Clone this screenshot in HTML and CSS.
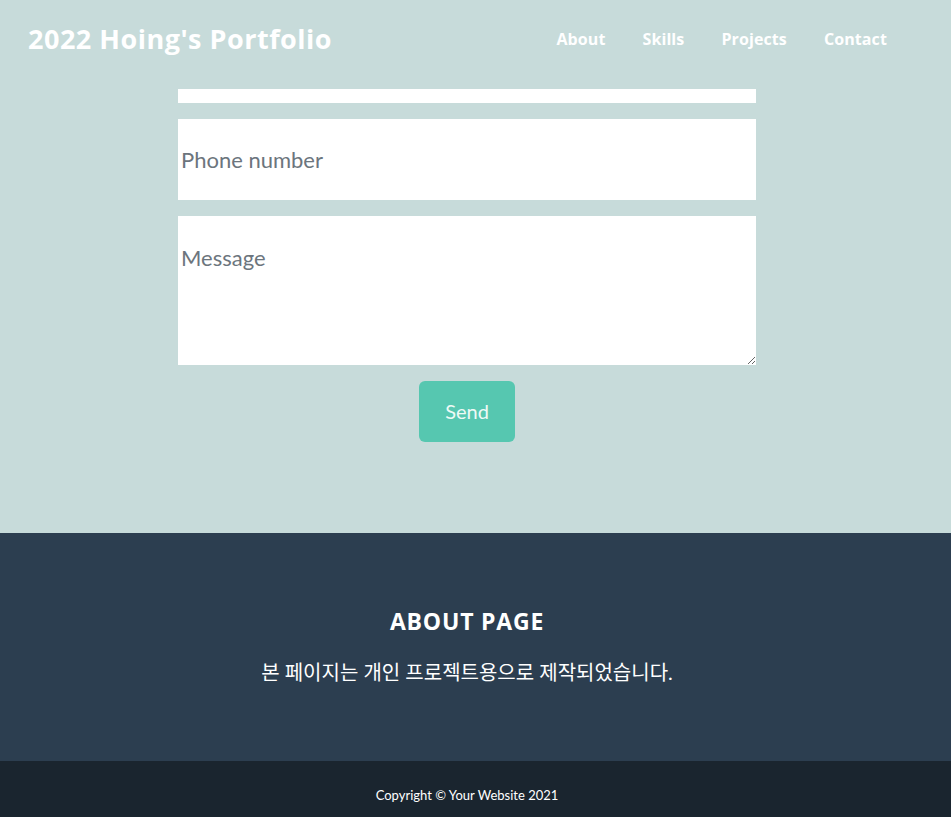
FILE: index.html
```html
<!DOCTYPE html>
<html lang="ko">
<head>
<meta charset="utf-8">
<title>2022 Hoing's Portfolio</title>
<link rel="stylesheet" href="styles.css">
</head>
<body>
<nav class="nav">
  <a class="brand" href="#">2022 Hoing's Portfolio</a>
  <ul class="menu">
    <li><a href="#">About</a></li>
    <li><a href="#">Skills</a></li>
    <li><a href="#">Projects</a></li>
    <li><a href="#">Contact</a></li>
  </ul>
</nav>
<section class="contact">
  <form class="form">
    <div class="input-tail"></div>
    <input class="field" type="tel" placeholder="Phone number">
    <textarea class="field area" placeholder="Message"></textarea>
    <button class="send" type="button">Send</button>
  </form>
</section>
<footer class="footer">
  <h4 class="footer-title">ABOUT PAGE</h4>
  <p class="footer-text">본 페이지는 개인 프로젝트용으로 제작되었습니다.</p>
</footer>
<div class="copyright">
  <small>Copyright © Your Website 2021</small>
</div>
</body>
</html>
```
FILE: styles.css
```css
html, body {
  margin: 0;
  padding: 0;
}
body {
  background: #c7dbda;
  font-family: "Lato", "Noto Sans CJK KR", sans-serif;
  width: 951px;
  overflow: hidden;
}
.nav {
  height: 89px;
  display: flex;
  align-items: center;
  justify-content: space-between;
  padding: 0 64px 0 28px;
  box-sizing: border-box;
}
.brand {
  color: #fff;
  text-decoration: none;
  font-family: "Open Sans", sans-serif;
  font-weight: 700;
  font-size: 27px;
  letter-spacing: 0.5px;
  margin-top: -12px;
}
.menu {
  list-style: none;
  display: flex;
  gap: 37px;
  margin: 0;
  padding: 0;
  margin-top: -11px;
}
.menu a {
  color: #fff;
  text-decoration: none;
  font-family: "Open Sans", sans-serif;
  font-weight: 700;
  font-size: 16px;
  letter-spacing: 0.1px;
}
.contact {
  padding-right: 17px;
  height: 444px;
}
.form {
  width: 578px;
  margin: 0 auto;
  display: flex;
  flex-direction: column;
  gap: 16px;
}
.input-tail {
  height: 14px;
  background: #fff;
}
.field {
  display: block;
  width: 100%;
  box-sizing: border-box;
  border: none;
  background: #fff;
  font-family: "Lato", sans-serif;
  font-size: 22px;
  color: #495057;
  padding: 0 3px;
  margin: 0;
  outline: none;
}
.field::placeholder {
  color: #6c757d;
}
input.field {
  height: 81px;
}
.area {
  height: 149px;
  padding-top: 28px;
  resize: vertical;
}
.send {
  align-self: center;
  width: 96px;
  height: 61px;
  border: none;
  border-radius: 6px;
  background: #56c7b0;
  color: #eefaf6;
  font-family: "Lato", sans-serif;
  font-size: 20px;
  padding-bottom: 2px;
  cursor: pointer;
}
.footer {
  background: #2c3e50;
  color: #fff;
  height: 228px;
  padding-right: 17px;
  box-sizing: border-box;
  text-align: center;
  padding-top: 72px;
}
.footer-title {
  margin: 0;
  font-family: "Open Sans", sans-serif;
  font-weight: 700;
  font-size: 23px;
  letter-spacing: 0.8px;
}
.footer-text {
  margin: 20px 0 0;
  font-family: "Lato", "Noto Sans CJK KR", sans-serif;
  font-size: 20px;
}
.copyright {
  background: #1a252f;
  color: #fff;
  height: 56px;
  box-sizing: border-box;
  display: flex;
  align-items: center;
  justify-content: center;
  padding: 11px 17px 0 0;
  font-family: "Lato", sans-serif;
}
.copyright small {
  font-size: 13px;
}
```
